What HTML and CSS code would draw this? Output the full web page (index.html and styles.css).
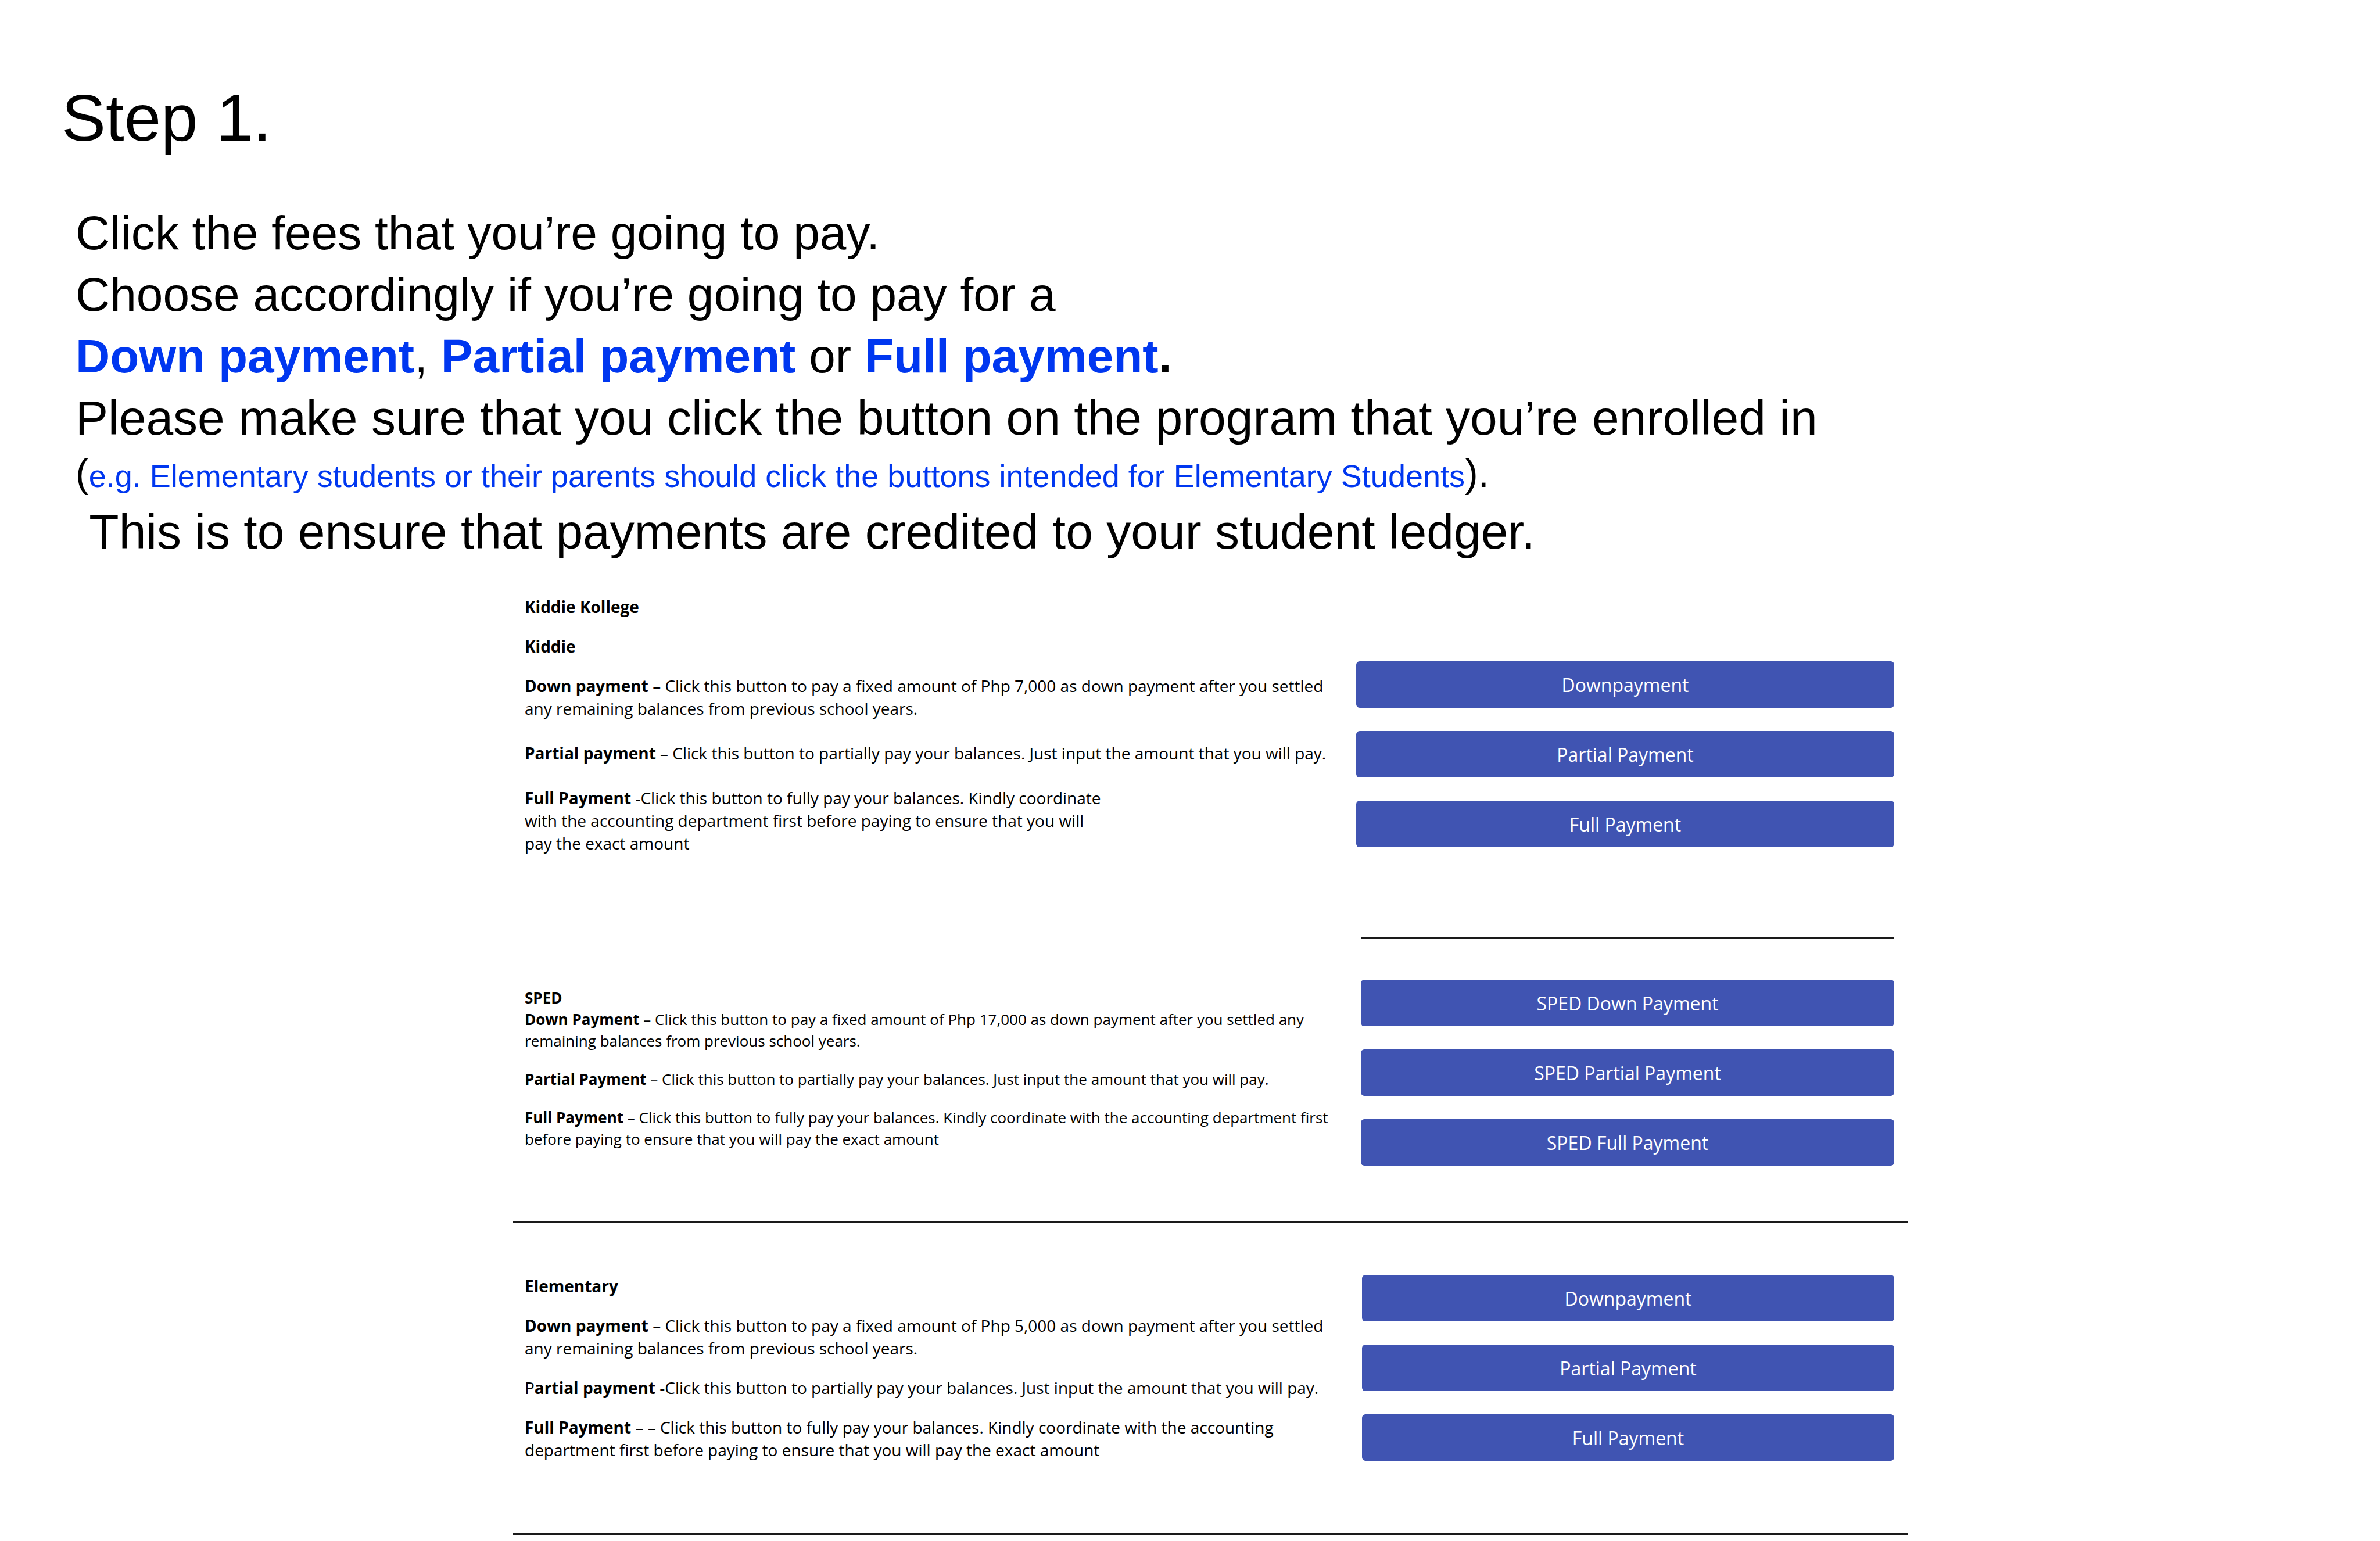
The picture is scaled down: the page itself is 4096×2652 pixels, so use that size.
FILE: index.html
```html
<!DOCTYPE html>
<html lang="en">
<head>
  <meta charset="utf-8">
  <meta name="viewport" content="width=device-width, initial-scale=1">
  <title>Step 1 – Choose the fees to pay</title>
  <link rel="stylesheet" href="styles.css">
</head>
<body>
  <header class="intro">
    <h1 class="intro-title">Step 1.</h1>
    <div class="intro-text">
      <p class="line line-lead">Click the fees that you’re going to pay.</p>
      <p class="line line-lead">Choose accordingly if you’re going to pay for a</p>
      <p class="line line-lead"><b class="accent">Down payment</b>, <b class="accent">Partial payment</b> or <b class="accent">Full payment</b><b>.</b></p>
      <p class="line">Please make sure that you click the button on the program that you’re enrolled in</p>
      <p class="line line-note">(<span class="note accent">e.g. Elementary students or their parents should click the buttons intended for Elementary Students</span>).</p>
      <p class="line">&nbsp;This is to ensure that payments are credited to your student ledger.</p>
    </div>
  </header>

  <main class="fees">
    <section class="program program-kiddie">
      <div class="details">
        <h2 class="program-name">Kiddie Kollege</h2>
        <h3 class="program-name">Kiddie</h3>
        <p class="fee"><b>Down payment</b> – Click this button to pay a fixed amount of Php 7,000 as down payment after you settled any remaining balances from previous school years.</p>
        <p class="fee"><b>Partial payment</b> – Click this button to partially pay your balances. Just input the amount that you will pay.</p>
        <p class="fee fee-narrow"><b>Full Payment</b> -Click this button to fully pay your balances. Kindly coordinate with the accounting department first before paying to ensure that you will pay the exact amount</p>
      </div>
      <div class="actions">
        <button class="pay" type="button">Downpayment</button>
        <button class="pay" type="button">Partial Payment</button>
        <button class="pay" type="button">Full Payment</button>
        <hr class="rule rule-short">
      </div>
    </section>

    <section class="program program-sped">
      <div class="details">
        <h2 class="program-name">SPED</h2>
        <p class="fee"><b>Down Payment</b> – Click this button to pay a fixed amount of Php 17,000 as down payment after you settled any remaining balances from previous school years.</p>
        <p class="fee"><b>Partial Payment</b> – Click this button to partially pay your balances. Just input the amount that you will pay.</p>
        <p class="fee"><b>Full Payment</b> – Click this button to fully pay your balances. Kindly coordinate with the accounting department first before paying to ensure that you will pay the exact amount</p>
      </div>
      <div class="actions">
        <button class="pay" type="button">SPED Down Payment</button>
        <button class="pay" type="button">SPED Partial Payment</button>
        <button class="pay" type="button">SPED Full Payment</button>
      </div>
    </section>
    <hr class="rule">

    <section class="program program-elementary">
      <div class="details">
        <h2 class="program-name">Elementary</h2>
        <p class="fee"><b>Down payment</b> – Click this button to pay a fixed amount of Php 5,000 as down payment after you settled any remaining balances from previous school years.</p>
        <p class="fee">P<b>artial payment</b> -Click this button to partially pay your balances. Just input the amount that you will pay.</p>
        <p class="fee"><b>Full Payment</b> – – Click this button to fully pay your balances. Kindly coordinate with the accounting department first before paying to ensure that you will pay the exact amount</p>
      </div>
      <div class="actions">
        <button class="pay" type="button">Downpayment</button>
        <button class="pay" type="button">Partial Payment</button>
        <button class="pay" type="button">Full Payment</button>
      </div>
    </section>
    <hr class="rule">
  </main>
</body>
</html>
```
FILE: styles.css
```css
* {
  box-sizing: border-box;
}

body,
h1,
h2,
h3,
p,
hr {
  margin: 0;
}

body {
  background: #fff;
  color: #000;
  font-family: "Liberation Sans", Arial, sans-serif;
}

/* Instructions */

.intro {
  padding: 135px 106px 0;
}

.intro-title {
  font-size: 114px;
  font-weight: 400;
  line-height: 136px;
}

.intro-text {
  padding: 77px 24px 0;
}

.line {
  font-size: 84px;
  line-height: 106px;
}

.line-lead {
  font-size: 82px;
}

.line-note {
  padding-bottom: 5px;
  font-size: 68px;
  line-height: 85px;
}

.note {
  font-size: 54px;
  line-height: 1;
}

.accent {
  color: #0037f0;
}

/* Fee list */

.fees {
  padding: 55px 812px 11px 883px;
  font-family: "Open Sans", "Noto Sans", sans-serif;
  font-size: 28px;
  line-height: 39px;
}

.program {
  display: grid;
  grid-template-columns: minmax(0, 1fr) 918px;
  padding: 0 24px 0 20px;
}

.details {
  display: flex;
  flex-direction: column;
  gap: 29px;
  padding-right: 36px;
}

.program-name {
  font-size: inherit;
  font-weight: 700;
}

.fee-narrow {
  max-width: 1000px;
}

.actions {
  display: flex;
  flex-direction: column;
  gap: 40px;
}

.pay {
  height: 80px;
  padding: 0 24px;
  border: 0;
  border-radius: 6px;
  background: #4054b2;
  color: #fff;
  font: inherit;
  font-size: 32px;
  cursor: pointer;
}

.pay:hover {
  background: #3346a3;
}

.rule {
  height: 3px;
  border: 0;
  background: #1a1a1a;
}

.rule-short {
  margin: 115px 0 0 8px;
}

.program-kiddie {
  grid-template-columns: minmax(0, 1fr) 926px;
}

.program-kiddie .details {
  padding-top: 2px;
}

.program-kiddie .fee + .fee {
  margin-top: 9px;
}

.program-kiddie .actions {
  padding-top: 115px;
}

.program-sped {
  padding-top: 70px;
  padding-bottom: 95px;
  font-size: 26px;
  line-height: 37px;
}

.program-sped .details {
  padding-top: 13px;
}

.program-sped .program-name {
  margin-bottom: -29px;
}

.program-elementary {
  grid-template-columns: minmax(0, 1fr) 916px;
  padding-top: 90px;
  padding-bottom: 123px;
}
```
